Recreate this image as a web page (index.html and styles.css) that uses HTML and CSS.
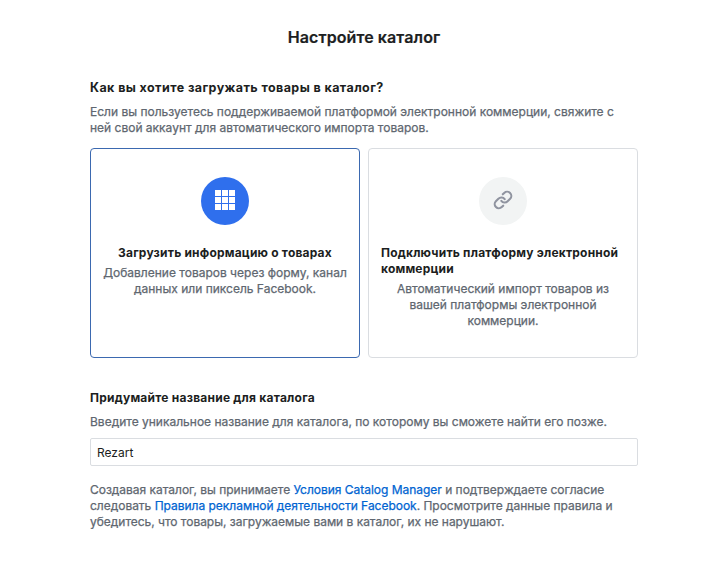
FILE: index.html
```html
<!DOCTYPE html>
<html lang="ru">
<head>
<meta charset="utf-8">
<title>Настройте каталог</title>
<link rel="stylesheet" href="styles.css">
</head>
<body>
<main class="page">
  <h1 class="title">Настройте каталог</h1>
  <section class="source">
    <h2 class="heading heading-main">Как вы хотите загружать товары в каталог?</h2>
    <p class="text">Если вы пользуетесь поддерживаемой платформой электронной коммерции, свяжите с<br>ней свой аккаунт для автоматического импорта товаров.</p>
    <div class="options">
      <div class="card card-selected">
        <div class="badge badge-blue">
          <svg width="20" height="20" viewBox="0 0 20 20" fill="#fff"><path d="M0 0h6v6H0zM7 0h6v6H7zM14 0h6v6h-6zM0 7h6v6H0zM7 7h6v6H7zM14 7h6v6h-6zM0 14h6v6H0zM7 14h6v6H7zM14 14h6v6h-6z"/></svg>
        </div>
        <h3 class="card-title">Загрузить информацию о товарах</h3>
        <p class="card-text">Добавление товаров через форму, канал<br>данных или пиксель Facebook.</p>
      </div>
      <div class="card">
        <div class="badge">
          <svg width="20" height="20" viewBox="0 0 24 24" fill="none" stroke="#9094a0" stroke-width="2.500" stroke-linecap="round" stroke-linejoin="round"><path d="M10 13a5 5 0 0 0 7.540.540l3-3a5 5 0 0 0-7.070-7.070l-1.720 1.710M14 11a5 5 0 0 0-7.540-.540l-3 3a5 5 0 0 0 7.070 7.070l1.710-1.710"/></svg>
        </div>
        <h3 class="card-title card-title-wrapped">Подключить платформу электронной<br>коммерции</h3>
        <p class="card-text">Автоматический импорт товаров из<br>вашей платформы электронной<br>коммерции.</p>
      </div>
    </div>
  </section>
  <section class="name">
    <h2 class="heading">Придумайте название для каталога</h2>
    <p class="text">Введите уникальное название для каталога, по которому вы сможете найти его позже.</p>
    <input class="field" type="text" value="Rezart">
  </section>
  <p class="text legal">Создавая каталог, вы принимаете <a class="link">Условия Catalog Manager</a> и подтверждаете согласие<br>следовать <a class="link">Правила рекламной деятельности Facebook</a>. Просмотрите данные правила и<br>убедитесь, что товары, загружаемые вами в каталог, их не нарушают.</p>
</main>
</body>
</html>
```
FILE: styles.css
```css
* { box-sizing: border-box; }
body { margin: 0; background: #fff; color: #1c1e21; font: 12px/16px Inter, sans-serif; }
h1, h2, h3, p { margin: 0; white-space: nowrap; }
.page { width: 548px; margin-left: 90px; padding-top: 27px; }
.title { font-size: 16px; line-height: 20px; font-weight: 600; letter-spacing: .1px; text-align: center; -webkit-text-stroke: .2px; }
.heading { font-size: 12px; line-height: 16px; font-weight: 700; letter-spacing: .23px; margin-bottom: 8px; }
.heading-main { font-size: 12.5px; letter-spacing: .41px; }
.source { margin-top: 33px; }
.text { color: #606770; -webkit-text-stroke: .25px; }
.options { display: grid; grid-template-columns: 270px 270px; gap: 8px; margin-top: 12px; }
.card { height: 210px; border: 1px solid #dadde1; border-radius: 4px; padding: 28px 12px 0; display: flex; flex-direction: column; align-items: center; }
.card-selected { border-color: #3b69b0; }
.badge { width: 48px; height: 48px; border-radius: 50%; background: #f2f4f4; display: flex; align-items: center; justify-content: center; margin-bottom: 20px; }
.badge svg { margin-top: -2px; }
.badge-blue { background: #2f6fed; }
.card-title { font-size: 12px; font-weight: 700; letter-spacing: .2px; margin-bottom: 4px; }
.card-title-wrapped { align-self: stretch; }
.card-text { color: #606770; text-align: center; -webkit-text-stroke: .25px; }
.name { margin-top: 32px; }
.field { display: block; width: 100%; height: 28px; margin-top: 8px; padding: 0 6px; border: 1px solid #dadde1; border-radius: 2px; font: inherit; color: #1c1e21; background: #fff; }
.legal { margin-top: 16px; letter-spacing: -.02px; }
.link { color: #0064d1; }
```
